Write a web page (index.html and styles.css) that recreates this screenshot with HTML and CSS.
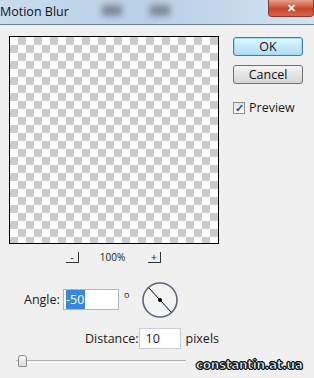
FILE: index.html
```html
<!DOCTYPE html>
<html lang="en">
<head>
    <meta charset="UTF-8">
    <title>Motion Blur</title>
    <link rel="stylesheet" href="styles.css">
</head>
<body>
    <div class="titlebar">
        <span class="title">Motion Blur</span>
        <span class="blob blob-a"></span>
        <span class="blob blob-b"></span>
        <span class="close">&#x2715;</span>
    </div>

    <div class="dialog">
        <div class="left">
            <div class="preview"></div>
            <div class="zoom-row">
                <span class="zoom-btn">-</span>
                <span class="zoom-value">100%</span>
                <span class="zoom-btn">+</span>
            </div>

            <div class="angle-row">
                <label for="angle">Angle:</label>
                <div class="field angle-field"><span class="selected">-50</span></div>
                <span class="degree">o</span>
                <svg class="dial" width="38" height="38" viewBox="0 0 38 38">
                    <circle cx="19" cy="19" r="17" fill="#f4f4f4" stroke="#5c6878" stroke-width="1.6"/>
                    <line x1="7.5" y1="6.5" x2="30.5" y2="31.5" stroke="#000" stroke-width="1"/>
                    <circle cx="19" cy="19" r="2" fill="#000"/>
                </svg>
            </div>

            <div class="distance-row">
                <label for="distance">Distance:</label>
                <div class="field distance-field">10</div>
                <span class="unit">pixels</span>
            </div>

            <div class="slider">
                <span class="track"></span>
                <span class="thumb"></span>
            </div>
        </div>

        <div class="right">
            <button class="btn btn-default">OK</button>
            <button class="btn">Cancel</button>
            <label class="check">
                <span class="box">&#x2713;</span>
                Preview
            </label>
        </div>
    </div>

    <div class="watermark">constantin.at.ua</div>
</body>
</html>
```

FILE: styles.css
```css
body {
    margin: 0;
    width: 314px;
    height: 378px;
    overflow: hidden;
    background: #f0f0f0;
    font-family: "Open Sans", "Noto Sans", sans-serif;
    font-size: 12px;
    color: #1a1a1a;
    position: relative;
}
.titlebar {
    height: 24px;
    border-bottom: 1px solid #6f7f92;
    background: linear-gradient(to right, #c9dcee, #b9cfe5 45%, #c4d7ea 70%, #d2e2f1);
    position: relative;
    overflow: hidden;
}
.title {
    position: absolute;
    left: 0;
    top: 3px;
    font-size: 12.5px;
    color: #111;
}
.blob {
    position: absolute;
    top: 5px;
    height: 11px;
    background: #6c7886;
    filter: blur(3px);
    opacity: 0.8;
}
.blob-a { left: 102px; width: 20px; }
.blob-b { left: 150px; width: 20px; }
.close {
    position: absolute;
    right: 0;
    top: 0;
    width: 44px;
    height: 16px;
    border-radius: 0 0 4px 4px;
    background: linear-gradient(to bottom, #e8a08c, #c8452d 55%, #d8664c);
    border: 1px solid #8d3a2c;
    border-top: none;
    color: #fff;
    font-size: 11px;
    font-weight: bold;
    text-align: center;
    line-height: 15px;
}
.dialog {
    display: flex;
    padding: 11px 0 0 9px;
}
.left {
    width: 210px;
}
.preview {
    width: 208px;
    height: 206px;
    border: 1px solid #000;
    background-color: #fff;
    background-image:
        linear-gradient(45deg, #cbcbcb 25%, transparent 25%, transparent 75%, #cbcbcb 75%),
        linear-gradient(45deg, #cbcbcb 25%, transparent 25%, transparent 75%, #cbcbcb 75%);
    background-size: 16px 16px;
    background-position: 0 0, 8px 8px;
}
.zoom-row {
    display: flex;
    align-items: center;
    margin: 7px 0 0 57px;
    height: 12px;
}
.zoom-btn {
    width: 12px;
    height: 10px;
    border-right: 1px solid #333;
    border-bottom: 1px solid #333;
    font-size: 11px;
    line-height: 9px;
    text-align: center;
}
.zoom-value {
    width: 67px;
    text-align: center;
    font-size: 10px;
    padding-right: 2px;
}
.angle-row {
    display: flex;
    align-items: center;
    margin: 16px 0 0 15px;
    height: 40px;
}
.angle-row label {
    width: 39px;
    font-size: 12.5px;
}
.field {
    background: #fff;
    border: 1px solid #a9b7c6;
    height: 19px;
    line-height: 19px;
    padding-left: 2px;
    box-sizing: border-box;
    font-size: 12.5px;
}
.angle-field {
    width: 56px;
    height: 21px;
    line-height: 19px;
}
.selected {
    background: #3a86d8;
    color: #fff;
    padding: 1px 1px 1px 0;
}
.degree {
    font-size: 9px;
    margin: -9px 0 0 5px;
    width: 12px;
}
.dial {
    margin: 2px 0 0 5px;
}
.distance-row {
    display: flex;
    align-items: center;
    margin: 9px 0 0 76px;
    height: 21px;
}
.distance-row label {
    width: 54px;
    font-size: 12.5px;
}
.distance-field {
    width: 55px;
    height: 21px;
    border-color: #c8ced6;
    padding-left: 6px;
}
.unit {
    margin-left: 5px;
    font-size: 12.5px;
}
.slider {
    position: relative;
    height: 14px;
    margin: 5px 0 0 7px;
    width: 170px;
}
.track {
    position: absolute;
    left: 0;
    right: 0;
    top: 6px;
    height: 1px;
    border-top: 1px solid #b4b4b4;
    border-bottom: 1px solid #fff;
}
.thumb {
    position: absolute;
    left: 2px;
    top: 1px;
    width: 7px;
    height: 10px;
    background: linear-gradient(#fafafa, #dcdcdc);
    border: 1px solid #8a8a8a;
    border-radius: 3px 3px 1px 1px;
}
.right {
    display: flex;
    flex-direction: column;
    margin-left: 14px;
    padding-top: 1px;
}
.btn {
    width: 70px;
    height: 19px;
    margin-bottom: 9px;
    border: 1px solid #707070;
    border-radius: 3px;
    background: linear-gradient(#f6f6f6, #e4e4e4 50%, #d6d6d6);
    font-family: "Open Sans", "Noto Sans", sans-serif;
    font-size: 12.5px;
    line-height: 15px;
    padding: 0;
    color: #111;
}
.btn-default {
    border-color: #3c7fb1;
    background: linear-gradient(#e8f6fd, #c8e9f9 50%, #b2ddf3);
    box-shadow: inset 0 0 0 1px #9fdcf5;
}
.check {
    display: flex;
    align-items: center;
    margin-top: 6px;
    font-size: 12.5px;
}
.box {
    width: 10px;
    height: 10px;
    border: 1px solid #8f8f8f;
    background: linear-gradient(#e0e0e0, #fff);
    color: #2b4c8c;
    font-size: 11px;
    line-height: 10px;
    text-align: center;
    font-weight: bold;
    margin-right: 4px;
}
.watermark {
    position: absolute;
    left: 196px;
    top: 358px;
    font-family: "DejaVu Sans", sans-serif;
    font-weight: bold;
    font-size: 12px;
    letter-spacing: -0.3px;
    color: #fff;
    -webkit-text-stroke: 0.6px #000;
    text-shadow: 1px 0 #000, -1px 0 #000, 0 1px #000, 0 -1px #000;
}
```
